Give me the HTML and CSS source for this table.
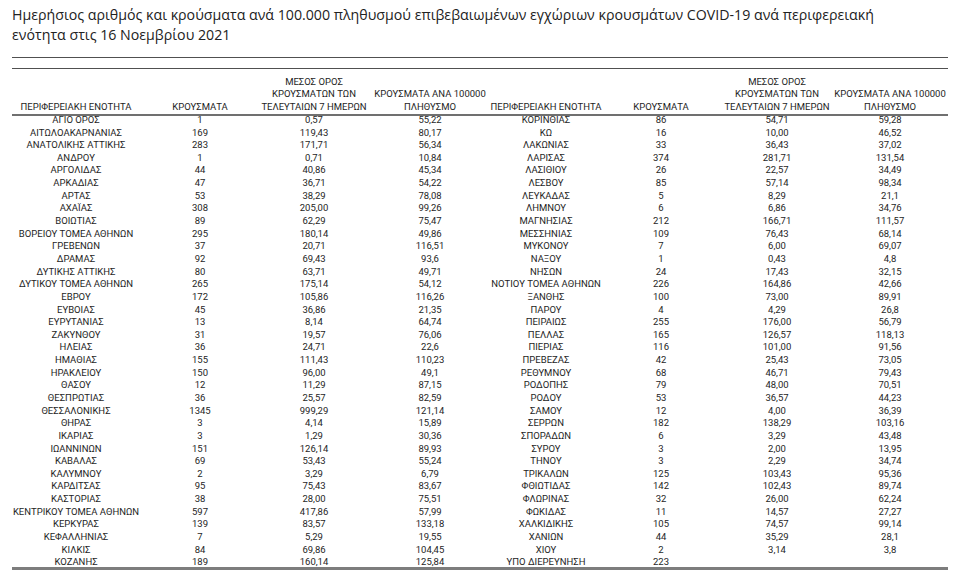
FILE: index.html
```html
<!DOCTYPE html>
<html lang="el">
<head>
<meta charset="utf-8">
<title>Κρούσματα COVID-19 ανά περιφερειακή ενότητα</title>
<link rel="stylesheet" href="styles.css">
</head>
<body>
<div class="page">
  <h1 class="title">Ημερήσιος αριθμός και κρούσματα ανά 100.000 πληθυσμού επιβεβαιωμένων εγχώριων κρουσμάτων COVID-19 ανά περιφερειακή<br>ενότητα στις 16 Νοεμβρίου 2021</h1>
  <div class="sheet">
    <div class="band"></div>
    <div class="head grid">
      <div>ΠΕΡΙΦΕΡΕΙΑΚΗ ΕΝΟΤΗΤΑ</div>
      <div>ΚΡΟΥΣΜΑΤΑ</div>
      <div>ΜΕΣΟΣ ΟΡΟΣ<br>ΚΡΟΥΣΜΑΤΩΝ ΤΩΝ<br>ΤΕΛΕΥΤΑΙΩΝ 7 ΗΜΕΡΩΝ</div>
      <div>ΚΡΟΥΣΜΑΤΑ ΑΝΑ 100000<br>ΠΛΗΘΥΣΜΟ</div>
      <div>ΠΕΡΙΦΕΡΕΙΑΚΗ ΕΝΟΤΗΤΑ</div>
      <div>ΚΡΟΥΣΜΑΤΑ</div>
      <div>ΜΕΣΟΣ ΟΡΟΣ<br>ΚΡΟΥΣΜΑΤΩΝ ΤΩΝ<br>ΤΕΛΕΥΤΑΙΩΝ 7 ΗΜΕΡΩΝ</div>
      <div>ΚΡΟΥΣΜΑΤΑ ΑΝΑ 100000<br>ΠΛΗΘΥΣΜΟ</div>
    </div>
    <div class="body" id="body"></div>
  </div>
</div>
<script src="script.js"></script>
</body>
</html>
```
FILE: styles.css
```css
html, body {
  margin: 0;
  padding: 0;
  background: #ffffff;
}
.page {
  padding: 5px 0 0 12px;
  width: 936px;
}
.title {
  margin: 0;
  font-family: "Open Sans", "Noto Sans", sans-serif;
  font-weight: 400;
  font-size: 14.2px;
  line-height: 20px;
  color: #222222;
  white-space: nowrap;
}
.sheet {
  margin-top: 12px;
  font-family: Roboto, "Noto Sans", sans-serif;
  font-size: 9.5px;
  color: #1e1e1e;
}
.band {
  height: 10px;
  border-top: 1px solid #505050;
  border-bottom: 1px solid #505050;
}
.grid {
  display: grid;
  grid-template-columns: 128px 120px 108px 124px 108px 122px 110px 116px;
}
.grid > div {
  text-align: center;
  white-space: nowrap;
  display: flex;
  justify-content: center;
}
.head {
  height: 44.5px;
  line-height: 12.6px;
  align-items: end;
  border-bottom: 2px solid #707070;
}
.head > div {
  align-items: flex-end;
  text-align: center;
}
.body {
  margin-top: -1.6px;
  height: 453.4px;
  border-bottom: 3px solid #7d7d7d;
}
.row {
  height: 12.65px;
  line-height: 12.65px;
}
```
FILE: script.js
```js
var left = [
["ΑΓΙΟ ΟΡΟΣ","1","0,57","55,22"],
["ΑΙΤΩΛΟΑΚΑΡΝΑΝΙΑΣ","169","119,43","80,17"],
["ΑΝΑΤΟΛΙΚΗΣ ΑΤΤΙΚΗΣ","283","171,71","56,34"],
["ΑΝΔΡΟΥ","1","0,71","10,84"],
["ΑΡΓΟΛΙΔΑΣ","44","40,86","45,34"],
["ΑΡΚΑΔΙΑΣ","47","36,71","54,22"],
["ΑΡΤΑΣ","53","38,29","78,08"],
["ΑΧΑΪΑΣ","308","205,00","99,26"],
["ΒΟΙΩΤΙΑΣ","89","62,29","75,47"],
["ΒΟΡΕΙΟΥ ΤΟΜΕΑ ΑΘΗΝΩΝ","295","180,14","49,86"],
["ΓΡΕΒΕΝΩΝ","37","20,71","116,51"],
["ΔΡΑΜΑΣ","92","69,43","93,6"],
["ΔΥΤΙΚΗΣ ΑΤΤΙΚΗΣ","80","63,71","49,71"],
["ΔΥΤΙΚΟΥ ΤΟΜΕΑ ΑΘΗΝΩΝ","265","175,14","54,12"],
["ΕΒΡΟΥ","172","105,86","116,26"],
["ΕΥΒΟΙΑΣ","45","36,86","21,35"],
["ΕΥΡΥΤΑΝΙΑΣ","13","8,14","64,74"],
["ΖΑΚΥΝΘΟΥ","31","19,57","76,06"],
["ΗΛΕΙΑΣ","36","24,71","22,6"],
["ΗΜΑΘΙΑΣ","155","111,43","110,23"],
["ΗΡΑΚΛΕΙΟΥ","150","96,00","49,1"],
["ΘΑΣΟΥ","12","11,29","87,15"],
["ΘΕΣΠΡΩΤΙΑΣ","36","25,57","82,59"],
["ΘΕΣΣΑΛΟΝΙΚΗΣ","1345","999,29","121,14"],
["ΘΗΡΑΣ","3","4,14","15,89"],
["ΙΚΑΡΙΑΣ","3","1,29","30,36"],
["ΙΩΑΝΝΙΝΩΝ","151","126,14","89,93"],
["ΚΑΒΑΛΑΣ","69","53,43","55,24"],
["ΚΑΛΥΜΝΟΥ","2","3,29","6,79"],
["ΚΑΡΔΙΤΣΑΣ","95","75,43","83,67"],
["ΚΑΣΤΟΡΙΑΣ","38","28,00","75,51"],
["ΚΕΝΤΡΙΚΟΥ ΤΟΜΕΑ ΑΘΗΝΩΝ","597","417,86","57,99"],
["ΚΕΡΚΥΡΑΣ","139","83,57","133,18"],
["ΚΕΦΑΛΛΗΝΙΑΣ","7","5,29","19,55"],
["ΚΙΛΚΙΣ","84","69,86","104,45"],
["ΚΟΖΑΝΗΣ","189","160,14","125,84"]
];
var right = [
["ΚΟΡΙΝΘΙΑΣ","86","54,71","59,28"],
["ΚΩ","16","10,00","46,52"],
["ΛΑΚΩΝΙΑΣ","33","36,43","37,02"],
["ΛΑΡΙΣΑΣ","374","281,71","131,54"],
["ΛΑΣΙΘΙΟΥ","26","22,57","34,49"],
["ΛΕΣΒΟΥ","85","57,14","98,34"],
["ΛΕΥΚΑΔΑΣ","5","8,29","21,1"],
["ΛΗΜΝΟΥ","6","6,86","34,76"],
["ΜΑΓΝΗΣΙΑΣ","212","166,71","111,57"],
["ΜΕΣΣΗΝΙΑΣ","109","76,43","68,14"],
["ΜΥΚΟΝΟΥ","7","6,00","69,07"],
["ΝΑΞΟΥ","1","0,43","4,8"],
["ΝΗΣΩΝ","24","17,43","32,15"],
["ΝΟΤΙΟΥ ΤΟΜΕΑ ΑΘΗΝΩΝ","226","164,86","42,66"],
["ΞΑΝΘΗΣ","100","73,00","89,91"],
["ΠΑΡΟΥ","4","4,29","26,8"],
["ΠΕΙΡΑΙΩΣ","255","176,00","56,79"],
["ΠΕΛΛΑΣ","165","126,57","118,13"],
["ΠΙΕΡΙΑΣ","116","101,00","91,56"],
["ΠΡΕΒΕΖΑΣ","42","25,43","73,05"],
["ΡΕΘΥΜΝΟΥ","68","46,71","79,43"],
["ΡΟΔΟΠΗΣ","79","48,00","70,51"],
["ΡΟΔΟΥ","53","36,57","44,23"],
["ΣΑΜΟΥ","12","4,00","36,39"],
["ΣΕΡΡΩΝ","182","138,29","103,16"],
["ΣΠΟΡΑΔΩΝ","6","3,29","43,48"],
["ΣΥΡΟΥ","3","2,00","13,95"],
["ΤΗΝΟΥ","3","2,29","34,74"],
["ΤΡΙΚΑΛΩΝ","125","103,43","95,36"],
["ΦΘΙΩΤΙΔΑΣ","142","102,43","89,74"],
["ΦΛΩΡΙΝΑΣ","32","26,00","62,24"],
["ΦΩΚΙΔΑΣ","11","14,57","27,27"],
["ΧΑΛΚΙΔΙΚΗΣ","105","74,57","99,14"],
["ΧΑΝΙΩΝ","44","35,29","28,1"],
["ΧΙΟΥ","2","3,14","3,8"],
["ΥΠΟ ΔΙΕΡΕΥΝΗΣΗ","223","",""]
];
var body = document.getElementById("body");
for (var i = 0; i < left.length; i++) {
  var row = document.createElement("div");
  row.className = "row grid";
  var cells = left[i].concat(right[i]);
  for (var j = 0; j < cells.length; j++) {
    var c = document.createElement("div");
    c.textContent = cells[j];
    row.appendChild(c);
  }
  body.appendChild(row);
}
```
